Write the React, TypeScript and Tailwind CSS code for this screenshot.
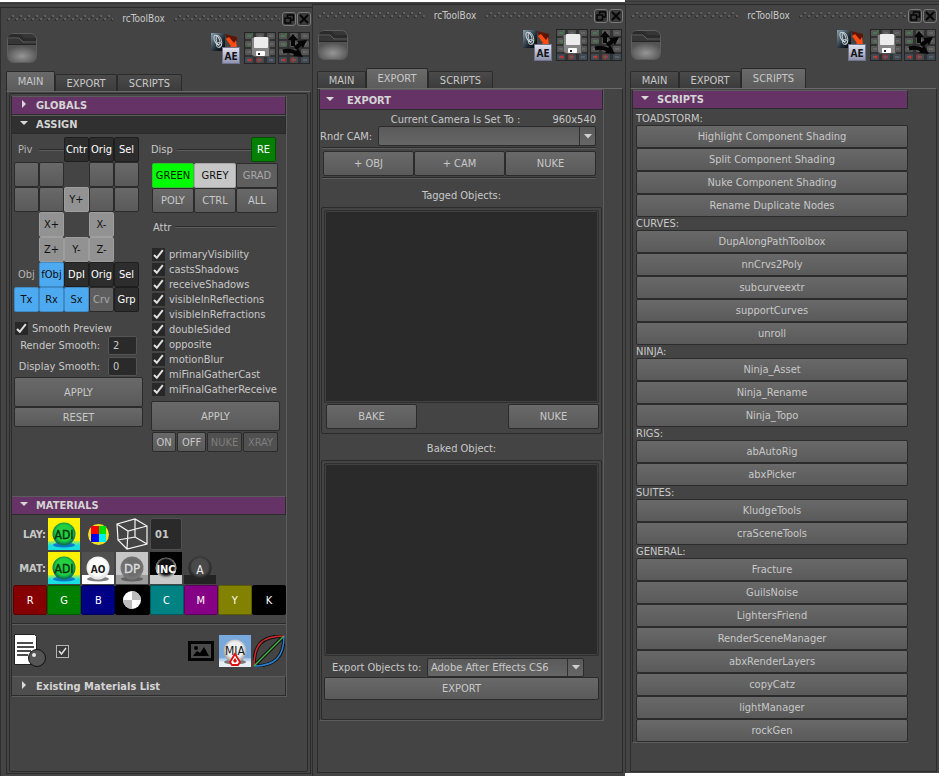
import { useId, type ReactNode } from "react";

const cx = (...parts: (string | false | undefined)[]) => parts.filter(Boolean).join(" ");

/* ---------- basic controls ---------- */

const tones = {
  plain: "border-[#2b2b2b] bg-linear-to-b from-[#696969] to-[#5a5a5a] text-[#c8c8c8]",
  off: "border-[#2b2b2b] bg-[#505050] text-[#7e7e7e]",
  dim: "border-[#2b2b2b] bg-[#5e5e5e] text-[#a8a8a8]",
  dark: "border-[#1e1e1e] bg-[#2d2d2d] text-white",
  light: "border-[#9e9e9e] bg-[#929292] text-[#111111]",
  blue: "border-[#3c8ac6] bg-[#4eaaf0] text-[#101010]",
  green: "border-[#2fc42f] bg-[#00ff00] text-[#0a200a]",
  grey: "border-[#a8a8a8] bg-[#c6c6c6] text-[#101010]",
  forest: "border-[#054f05] bg-[#058005] text-white",
};
type Tone = keyof typeof tones;

function Btn({ tone = "plain", className, children, label }: { tone?: Tone; className?: string; children?: ReactNode; label?: string }) {
  return (
    <button type="button" aria-label={label} className={cx("flex items-center justify-center overflow-hidden rounded-[2px] border whitespace-nowrap", tones[tone], className)}>
      {children}
    </button>
  );
}

function Check({ id, label, framed }: { id: string; label?: string; framed?: boolean }) {
  return (
    <span className="flex items-center">
      <span className="grid size-[13px] shrink-0 place-items-center">
        <input id={id} type="checkbox" defaultChecked aria-label={label ? undefined : "Enabled"}
          className={cx("col-start-1 row-start-1 size-full appearance-none", framed ? "border border-[#b5b5b5] bg-[#3a3a3a]" : "bg-[#282828]")} />
        <svg viewBox="0 0 13 13" className="pointer-events-none col-start-1 row-start-1 size-full" aria-hidden="true">
          <path d={framed ? "M3 6 5.500 9 10 3" : "M2 7 4.800 9.800 10.800 2.200"} fill="none" stroke="#e0e0e0" strokeWidth={framed ? "1.500" : "2"} />
        </svg>
      </span>
      {label && <label htmlFor={id} className="pl-1 whitespace-nowrap">{label}</label>}
    </span>
  );
}

function Select({ id, label, options, className }: { id: string; label?: string; options: string[]; className?: string }) {
  return (
    <span className={cx("grid min-w-0", className)}>
      <select id={id} aria-label={label} className="col-start-1 row-start-1 w-full appearance-none rounded-[2px] border border-[#2b2b2b] bg-linear-to-b from-[#5a5a5a] to-[#666666] pr-5 pl-[3px] text-[#c8c8c8]">
        {options.map((o) => <option key={o}>{o}</option>)}
      </select>
      <span className="pointer-events-none col-start-1 row-start-1 my-px flex w-[17px] items-center justify-center justify-self-end border-l border-[#2f2f2f]">
        <svg viewBox="0 0 8 5" className="h-[5px] w-2" aria-hidden="true"><path d="M0 0h8L4 4.500z" fill="#d0d0d0" /></svg>
      </span>
    </span>
  );
}

function Header({ title, open, tone, className, wide }: { title: string; open?: boolean; tone: "purple" | "dark" | "grey"; className?: string; wide?: boolean }) {
  return (
    <button type="button" aria-expanded={!!open}
      className={cx("flex w-full items-center border-t border-r border-b border-t-[#5c5c5c] border-r-[#2b2b2b] border-b-[#2b2b2b] text-left font-bold text-[#d4d4d4]",
        tone === "purple" && "bg-[#663366]", tone === "dark" && "bg-[#303030]", tone === "grey" && "bg-[#4e4e4e]", wide ? "pl-[6px]" : "pl-2", className ?? "h-[19px]")}>
      <svg viewBox="0 0 8 8" className="mb-[3px] size-2 shrink-0" aria-hidden="true">
        <path d={open ? "M0 2h8L4 6z" : "M2 0v8l4-4z"} fill="#d8d8d8" />
      </svg>
      <span className={wide ? "pl-[13px]" : "pl-2"}>{title}</span>
    </button>
  );
}

function Rule({ className }: { className?: string }) {
  return <div className={cx("h-[2px] border-t border-b border-t-[#2b2b2b] border-b-[#5c5c5c]", className)} />;
}

/* ---------- toolbar drawings ---------- */

function Grip() {
  const id = useId();
  return (
    <svg className="h-[7px] min-w-0 flex-1" aria-hidden="true">
      <pattern id={id} width="8" height="7" patternUnits="userSpaceOnUse">
        <path d="M0 4h2v2H0zM4 1h2v2H4z" fill="#323232" />
        <path d="M1 3h2v2H1zM5 0h2v2H5z" fill="#606060" />
      </pattern>
      <rect width="100%" height="7" fill={`url(#${id})`} />
    </svg>
  );
}

function FolderIcon() {
  const id = useId();
  return (
    <svg viewBox="0 0 30 30" className="size-[30px]" aria-hidden="true">
      <radialGradient id={id} cx=".5" cy=".65" r=".6"><stop offset="0" stopColor="#969696" /><stop offset="1" stopColor="#535353" /></radialGradient>
      <rect x=".5" y=".5" width="29" height="29" rx="6" fill="#363636" stroke="#5e5e5e" />
      <path d="M1 4Q2 1 6 1h7l4 4h12v5H18l-4-4H1z" fill="#2b2b2b" />
      <path d="M1 5h11l4 4h13" fill="none" stroke="#606060" />
      <path d="M1 12h28v12q0 5-5 5H6q-5 0-5-5z" fill={`url(#${id})`} />
      <path d="M1 11.500h28" stroke="#242424" />
    </svg>
  );
}

function AfterEffectsIcon() {
  const id = useId();
  return (
    <svg viewBox="0 0 32 32" className="size-8" aria-hidden="true">
      <linearGradient id={id} x2="1" y2="1"><stop stopColor="#8aa2b0" /><stop offset=".6" stopColor="#1d2a33" /><stop offset="1" stopColor="#000" /></linearGradient>
      <linearGradient id={id + "b"} y2="1" x2="0"><stop stopColor="#e2e3ef" /><stop offset="1" stopColor="#8d90ad" /></linearGradient>
      <rect x="1" y="1" width="14" height="18" fill={`url(#${id})`} />
      <g fill="none" stroke="#cfd8dc" strokeWidth=".9"><ellipse cx="7" cy="8" rx="2.500" ry="5" transform="rotate(-25 7 8)" /><ellipse cx="9" cy="9" rx="2.500" ry="5.500" transform="rotate(-15 9 9)" /><circle cx="9" cy="13" r="2.500" /></g>
      <path d="m15 2 12 3v3l-2 4-9-7z" fill="#5c1607" />
      <path d="m16 7 3-2 5 6 2-3 1 8-9 1 3-3z" fill="#ff4a10" />
      <rect x="12.500" y="15.500" width="17" height="16" fill={`url(#${id}b)`} stroke="#70748e" />
      <text x="21" y="28" textAnchor="middle" fontSize="10" fontWeight="700" fill="#14141c">AE</text>
    </svg>
  );
}

function KeyGrid() {
  return (
    <>
      <rect width="32" height="32" fill="#323232" />
      {[0, 1, 2, 3].map((r) => [0, 1, 2].map((c) => (
        <g key={`${r}${c}`}>
          <rect x={1 + c * 11} y={1 + r * 8} width="8" height="6" rx="1" fill={r === 3 ? "#3f4a55" : "#555555"} />
          <path d={`M${3 + c * 11} ${4 + r * 8}h4`} stroke="#787878" />
        </g>
      )))}
      <path d="m4 3 1 2 4-4M4 13l2 1 3-3" fill="none" stroke="#2a8a38" />
      <circle cx="6" cy="28" r="1.500" fill="#e02828" /><circle cx="15" cy="28" r="2" fill="none" stroke="#b92d20" />
      <rect x=".5" y=".5" width="31" height="31" fill="none" stroke="#252525" />
    </>
  );
}

function SaveIcon() {
  return (
    <svg viewBox="0 0 32 32" className="size-8" aria-hidden="true">
      <KeyGrid />
      <path d="M7.500 5.500h18v19H10l-2.500-2z" fill="#858585" stroke="#4e4e4e" />
      <rect x="10" y="5" width="14" height="11" rx="1" fill="#ececec" />
      <rect x="12" y="19" width="9" height="5" rx="1" fill="#fff" /><path d="M14 21h2v2h-2z" fill="#222" />
    </svg>
  );
}

function MoveIcon() {
  return (
    <svg viewBox="0 0 32 32" className="size-8" aria-hidden="true">
      <KeyGrid />
      <path d="M15 14V8M17 16l6-4M5 19.500q8-2 14 2" fill="none" stroke="#050505" strokeWidth="4" />
      <path d="m10 8 5-6 5 6zM19 9l10-1-4 8zM20 16l5 9-10-1z" fill="#050505" />
    </svg>
  );
}

/* ---------- panel shell ---------- */

function Panel({ active, top, tail, className, frame, children }: { active: string; top: string; tail: string; className?: string; frame?: string; children: ReactNode }) {
  return (
    <section className={cx("flex min-w-0 flex-col bg-[#444444]", className)}>
      <div className={cx("border-b border-[#2b2b2b]", top)}><div className="h-[2px] border-b border-[#383838]" /></div>
      <div className={cx("flex flex-1 flex-col border-l border-[#2e2e2e]", tail)}>
        <header className="flex h-[21px] items-center gap-px pl-px">
          <Grip />
          <h1 className="px-2 text-[10px]">rcToolBox</h1>
          <Grip />
          <button type="button" aria-label="Float panel" className="ml-px size-[14px] rounded-[3px] border border-[#7a7a7a] bg-[#3a3a3a]">
            <svg viewBox="0 0 12 12" className="size-3" aria-hidden="true"><path d="M4.500 4V2h6v5H8M2 5h5.500v5H2z" fill="none" stroke="#050505" strokeWidth="1.500" /></svg>
          </button>
          <button type="button" aria-label="Close panel" className="size-[14px] rounded-[3px] border border-[#7a7a7a] bg-[#3a3a3a]">
            <svg viewBox="0 0 12 12" className="size-3" aria-hidden="true"><path d="m2 2 8 8M10 2l-8 8" stroke="#050505" strokeWidth="1.800" /></svg>
          </button>
        </header>
        <div className="mt-[3px] flex h-8 items-center pr-px pl-px">
          <button type="button" aria-label="Open folder"><FolderIcon /></button>
          <div className="ml-auto flex gap-[2px]">
            <button type="button" aria-label="Export to After Effects"><AfterEffectsIcon /></button>
            <button type="button" aria-label="Save shelf"><SaveIcon /></button>
            <button type="button" aria-label="Move shelf"><MoveIcon /></button>
          </div>
        </div>
        <div role="tablist" className="mt-[7px] flex h-5 items-end text-[11px]">
          {["MAIN", "EXPORT", "SCRIPTS"].map((t) => (
            <button key={t} type="button" role="tab" aria-selected={t === active}
              className={cx("rounded-t-[2px] border border-b-0 text-center", t === "MAIN" ? "w-[49px]" : t === "EXPORT" ? "w-[62px]" : "w-[65px]",
                t === active ? "h-5 border-[#292929] bg-linear-to-b from-[#6a6a6a] to-[#5c5c5c]" : "h-[17px] border-[#2b2b2b] bg-linear-to-b from-[#4a4a4a] to-[#3c3c3c]")}>
              {t}
            </button>
          ))}
        </div>
        <div role="tabpanel" className={cx("flex-1 border border-[#2b2b2b] border-t-[#6a6a6a]", frame)}>{children}</div>
      </div>
    </section>
  );
}

/* ---------- MAIN ---------- */

type Cell = [string, Tone] | null | "blank" | "label:Piv" | "label:Obj" | "line";
const pivotCells: Cell[] = [
  "label:Piv", "line", ["Cntr", "dark"], ["Orig", "dark"], ["Sel", "dark"],
  "blank", "blank", null, "blank", "blank",
  "blank", "blank", ["Y+", "light"], "blank", "blank",
  null, ["X+", "light"], null, ["X-", "light"], null,
  null, ["Z+", "light"], ["Y-", "light"], ["Z-", "light"], null,
  "label:Obj", ["fObj", "blue"], ["DpI", "dark"], ["Orig", "dark"], ["Sel", "dark"],
  ["Tx", "blue"], ["Rx", "blue"], ["Sx", "blue"], ["Crv", "dim"], ["Grp", "dark"],
];
const attributes = ["primaryVisibility", "castsShadows", "receiveShadows", "visibleInReflections", "visibleInRefractions", "doubleSided", "opposite", "motionBlur", "miFinalGatherCast", "miFinalGatherReceive"];

function PivotGrid() {
  return (
    <div className="grid auto-rows-[25px] grid-cols-[repeat(5,25px)]">
      {pivotCells.map((c, i) => {
        if (c === null) return <span key={i} />;
        if (c === "line") return <Rule key={i} className="self-center" />;
        if (c === "blank") return <Btn key={i} label="Pivot point" />;
        if (typeof c === "string") return <span key={i} className="self-center pl-1 text-[#b5b5b5]">{c.slice(6)}</span>;
        return <Btn key={i} tone={c[1]}>{c[0]}</Btn>;
      })}
    </div>
  );
}

function Assign() {
  return (
    <div className="flex min-h-[362px] gap-2 pt-[3px] pl-[2px]">
      <div className="flex w-[129px] flex-col">
        <PivotGrid />
        <div className="mt-[10px] pl-px"><Check id="smooth" label="Smooth Preview" /></div>
        <div className="flex h-5 items-center justify-end pr-[6px]">
          <label htmlFor="rs">Render Smooth:</label>
          <input id="rs" defaultValue="2" className="ml-2 h-[19px] w-[29px] rounded-[2px] border border-[#555555] bg-[#2a2a2a] pl-1" />
        </div>
        <div className="flex h-[22px] items-center justify-end pr-[6px]">
          <label htmlFor="ds">Display Smooth:</label>
          <input id="ds" defaultValue="0" className="ml-2 h-[19px] w-[29px] rounded-[2px] border border-[#555555] bg-[#2a2a2a] pl-1" />
        </div>
        <Btn className="h-[30px]">APPLY</Btn>
        <Btn className="h-5">RESET</Btn>
      </div>
      <div className="flex w-[129px] flex-col">
        <div className="flex h-[25px] items-center">
          <span>Disp</span><Rule className="ml-1 flex-1" /><Btn tone="forest" className="mr-1 size-[25px]">RE</Btn>
        </div>
        <div className="mt-px grid auto-rows-[25px] grid-cols-[repeat(3,42px)] pl-px">
          <Btn tone="green">GREEN</Btn><Btn tone="grey">GREY</Btn><Btn tone="dim">GRAD</Btn>
          <Btn>POLY</Btn><Btn>CTRL</Btn><Btn>ALL</Btn>
        </div>
        <div className="flex h-[28px] items-center pr-1 pl-[2px]"><span>Attr</span><Rule className="ml-1 flex-1" /></div>
        <div className="mt-[7px] flex flex-col gap-[2px] pl-px">
          {attributes.map((a) => <Check key={a} id={a} label={a} />)}
        </div>
        <Btn className="mt-[5px] h-[30px]">APPLY</Btn>
        <div className="mt-px flex h-5 gap-px pl-px">
          <Btn className="w-[24px]">ON</Btn><Btn className="w-[29px]">OFF</Btn><Btn tone="off" className="w-[35px]">NUKE</Btn><Btn tone="off" className="w-[35px]">XRAY</Btn>
        </div>
      </div>
    </div>
  );
}

function Ball({ kind }: { kind: "ADI" | "AO" | "DP" | "INC" | "A" | "MIA" }) {
  const id = useId();
  const k = {
    ADI: { bg: "#fff200", floor: "#18e0e0", hi: "#22d040", lo: "#067a52", ink: "#06320f", size: 12 },
    AO: { bg: "#505050", floor: "#ffffff", hi: "#ffffff", lo: "#e6e6e6", ink: "#1c1c1c", size: 10 },
    DP: { bg: "#c6c6c6", floor: "#9a9a9a", hi: "#6c6c6c", lo: "#777777", ink: "#dddddd", size: 13 },
    INC: { bg: "#000000", floor: "#c9c9c9", hi: "#111111", lo: "#b8b8b8", ink: "#ffffff", size: 11 },
    A: { bg: "#444444", floor: "#232323", hi: "#4a4a4a", lo: "#242424", ink: "#f0f0f0", size: 12 },
    MIA: { bg: "#78a8dc", floor: "#e8eef5", hi: "#f0f0f0", lo: "#a8a8a8", ink: "#151515", size: 12 },
  }[kind];
  return (
    <svg viewBox="0 0 32 32" className="size-8" aria-hidden="true">
      <radialGradient id={id} cx=".5" cy=".45"><stop stopColor={k.hi} /><stop offset=".7" stopColor={k.hi} /><stop offset="1" stopColor={k.lo} /></radialGradient>
      <linearGradient id={id + "f"} x2="0" y2="1"><stop stopColor={k.floor} stopOpacity={kind === "ADI" || kind === "MIA" ? ".3" : "1"} /><stop offset=".5" stopColor={k.floor} /></linearGradient>
      <rect width="32" height="32" fill={k.bg} />
      <rect y="23" width="32" height="9" fill={`url(#${id}f)`} />
      {kind !== "A" && kind !== "INC" && <ellipse cx="16" cy="27" rx="11" ry="2.500" fill={kind === "ADI" ? "#0a48c8" : "#4a4a4a"} opacity=".7" />}
      <circle cx="16" cy="16" r={kind === "INC" ? 10.500 : 11.500} fill={`url(#${id})`} />
      <text x="16" y={kind === "A" ? 22 : kind === "MIA" ? 20 : 21} textAnchor="middle" fontSize={k.size} fontWeight={kind === "AO" || kind === "INC" ? 700 : 400} fill={k.ink} stroke={kind === "DP" || kind === "ADI" ? k.ink : "none"} strokeWidth=".4">{kind}</text>
      {kind === "MIA" && <><path d="m16 19 5 8-2 3h-6l-2-3z" fill="#fff" stroke="#dc1010" strokeWidth="1.800" /><path d="m16 23 2 3-2 2-2-2z" fill="#dc1010" /></>}
    </svg>
  );
}

function Materials() {
  const swatches = [["R", "bg-[#850000] border-[#5c0000]"], ["G", "bg-[#008000] border-[#005a00]"], ["B", "bg-[#000085] border-[#00005c]"], ["", "bg-black border-black"], ["C", "bg-[#008282] border-[#005c5c]"], ["M", "bg-[#850085] border-[#5c005c]"], ["Y", "bg-[#828200] border-[#5c5c00]"], ["K", "bg-black border-black"]];
  return (
    <div>
      <div className="mt-[3px] flex h-8 items-center gap-[2px]">
        <span className="w-[34px] text-right font-semibold">LAY:</span>
        <button type="button" aria-label="ADI layer"><Ball kind="ADI" /></button>
        <button type="button" aria-label="Colour layer">
          <svg viewBox="0 0 32 32" className="size-8" aria-hidden="true"><circle cx="16.500" cy="16.500" r="10.500" fill="#f4e020" /><path d="M9 8h8v8H9z" fill="red" /><path d="M17 8h7v8h-7z" fill="#00e000" /><path d="M9 16h8v8H9z" fill="#0000f0" /><path d="M17 16h7v8h-7z" fill="#00f0f0" /></svg>
        </button>
        <button type="button" aria-label="Wireframe layer">
          <svg viewBox="0 0 32 32" className="size-8" aria-hidden="true"><path d="M1 6 19 1l12 7v18L11 31 2 22zM1 6l11 7 19-5M12 13l-1 18M19 1v18L2 22M19 19l12 7" fill="none" stroke="#f5f5f5" strokeWidth="1.200" /></svg>
        </button>
        <input aria-label="Layer number" defaultValue="01" className="size-8 rounded-[2px] border border-[#505050] bg-[#2a2a2a] pl-1 font-bold" />
      </div>
      <div className="mt-[2px] flex h-8 items-center gap-[2px]">
        <span className="w-[34px] text-right font-semibold">MAT:</span>
        {(["ADI", "AO", "DP", "INC", "A"] as const).map((k) => <button key={k} type="button" aria-label={`${k} material`}><Ball kind={k} /></button>)}
      </div>
      <div className="mt-px grid h-[30px] grid-cols-8 pl-px">
        {swatches.map(([t, c], i) => (
          <button key={i} type="button" aria-label={t || "Checker"} className={cx("flex items-center justify-center rounded-[2px] border text-white", c)}>
            {t || <svg viewBox="0 0 18 18" className="size-[18px]" aria-hidden="true"><circle cx="9" cy="9" r="9" fill="#fff" /><path d="M9 0a9 9 0 0 1 9 9H9zM9 18a9 9 0 0 1-9-9h9z" fill="#bdbdbd" /></svg>}
          </button>
        ))}
      </div>
      <Rule className="mt-2" />
      <div className="mt-[9px] mb-2 flex h-[34px] items-center pr-px pl-[2px]">
        <button type="button" aria-label="Material notes">
          <svg viewBox="0 0 32 34" className="h-[34px] w-8" aria-hidden="true">
            <path d="M.5.500h20l2 2v28H.500z" fill="#fff" stroke="#222" /><path d="M3 9h16M3 13h17M3 17h14M3 21h11" stroke="#111" strokeWidth="1.500" />
            <circle cx="23" cy="24" r="8.500" fill="#555" stroke="#111" /><circle cx="20" cy="21" r="2" fill="#e8e8e8" />
          </svg>
        </button>
        <div className="ml-[10px]"><Check id="notes" framed /></div>
        <div className="ml-auto flex items-center">
          <button type="button" aria-label="File texture" className="mr-[5px]">
            <svg viewBox="0 0 26 20" className="h-5 w-[26px]" aria-hidden="true"><path d="M1.500 1.500h23v17h-23z" fill="#4a4a4a" stroke="#050505" strokeWidth="3" /><circle cx="8" cy="7" r="2" /><path d="m5 15 4-5 3 2 4-6 5 9z" /></svg>
          </button>
          <button type="button" aria-label="MIA material" className="mr-[2px]"><Ball kind="MIA" /></button>
          <button type="button" aria-label="Curves">
            <svg viewBox="0 0 32 32" className="size-8" fill="none" strokeWidth="1.500" aria-hidden="true"><g stroke="#111" strokeWidth="3.500"><path d="M1 31C1 10 8 1 31 1" /><path d="M1 31C22 31 31 22 31 1" /><path d="M1 31 31 1" /></g><path d="M1 31C1 10 8 1 31 1" stroke="#d02a2a" /><path d="M1 31C22 31 31 22 31 1" stroke="#2a7fd0" /><path d="M1 31 31 1" stroke="#44b544" /></svg>
          </button>
        </div>
      </div>
    </div>
  );
}

function MainTab() {
  return (
    <div className="h-full rounded-[2px] border border-[#2b2b2b] pt-[2px] pr-5 pl-px">
      <div className="border-r border-b border-l border-r-[#5c5c5c] border-b-[#5c5c5c] border-l-[#2b2b2b]">
        <Header title="GLOBALS" tone="purple" />
        <Header title="ASSIGN" open tone="dark" />
        <Assign />
        <Header title="MATERIALS" open tone="purple" />
        <Materials />
        <Header title="Existing Materials List" tone="grey" className="h-5" />
      </div>
    </div>
  );
}

/* ---------- EXPORT ---------- */

function ListBox({ label }: { label: string }) {
  return <div role="listbox" aria-label={label} className="h-[193px] rounded-[2px] border border-[#303030] bg-[#2a2a2a] outline outline-[#404040] -outline-offset-2" />;
}

function ExportTab() {
  return (
    <div className="mr-[18px] ml-px border-r border-b border-l border-r-[#5c5c5c] border-b-[#5c5c5c] border-l-[#2b2b2b]">
      <Header title="EXPORT" open tone="purple" wide className="h-[21px] pt-px" />
      <div className="flex h-4 items-center justify-end gap-8 pt-[3px] pr-[7px]"><span>Current Camera Is Set To :</span><span>960x540</span></div>
      <div className="flex h-5 items-center pr-[7px]">
        <label htmlFor="cam" className="w-[58px] shrink-0 whitespace-nowrap">Rndr CAM:</label>
        <Select id="cam" options={[""]} className="h-5 flex-1" />
      </div>
      <Rule className="mt-px mr-[7px] ml-[2px]" />
      <div className="mt-[2px] mr-[7px] ml-[3px] grid h-[25px] grid-cols-3"><Btn>+ OBJ</Btn><Btn>+ CAM</Btn><Btn>NUKE</Btn></div>
      <Rule className="mt-px mr-[7px] ml-[2px]" />
      <h2 className="flex h-[28px] items-center justify-center pt-1">Tagged Objects:</h2>
      <div className="mx-px rounded-[2px] border border-[#2b2b2b] px-[2px] pt-[2px] pb-1">
        <ListBox label="Tagged Objects" />
        <div className="mt-px flex justify-between pl-[2px]"><Btn className="h-[25px] w-[91px]">BAKE</Btn><Btn className="h-[25px] w-[91px]">NUKE</Btn></div>
      </div>
      <h2 className="flex h-[26px] items-center justify-center pt-[3px]">Baked Object:</h2>
      <div className="mx-px rounded-[2px] border border-[#2b2b2b] px-[2px] pt-[2px] pb-[19px]">
        <ListBox label="Baked Object" />
        <div className="mt-px flex h-5 items-center pr-[15px] pl-2">
          <label htmlFor="target" className="whitespace-nowrap">Export Objects to:</label>
          <Select id="target" options={["Adobe After Effects CS6"]} className="ml-auto h-[19px] w-[157px]" />
        </div>
        <Btn className="h-[23px] w-full">EXPORT</Btn>
      </div>
    </div>
  );
}

/* ---------- SCRIPTS ---------- */

const scripts: [string, string[]][] = [
  ["TOADSTORM:", ["Highlight Component Shading", "Split Component Shading", "Nuke Component Shading", "Rename Duplicate Nodes"]],
  ["CURVES:", ["DupAlongPathToolbox", "nnCrvs2Poly", "subcurveextr", "supportCurves", "unroll"]],
  ["NINJA:", ["Ninja_Asset", "Ninja_Rename", "Ninja_Topo"]],
  ["RIGS:", ["abAutoRig", "abxPicker"]],
  ["SUITES:", ["KludgeTools", "craSceneTools"]],
  ["GENERAL:", ["Fracture", "GuilsNoise", "LightersFriend", "RenderSceneManager", "abxRenderLayers", "copyCatz", "lightManager", "rockGen"]],
];

function ScriptsTab() {
  return (
    <div className="mr-[28px] ml-px border-b border-l border-b-[#5c5c5c] border-l-[#2b2b2b]">
      <Header title="SCRIPTS" open tone="purple" />
      <div className="pt-[3px] pl-[3px]">
        {scripts.map(([group, names]) => (
          <div key={group} className="flex flex-col">
            <h2 className="h-[13px] leading-[13px]">{group}</h2>
            {names.map((n) => <Btn key={n} className="h-[23px]">{n}</Btn>)}
          </div>
        ))}
      </div>
    </div>
  );
}

export default function App() {
  return (
    <main className="grid min-h-screen grid-cols-[312fr_313fr_314fr] bg-white font-['DejaVu_Sans_Condensed','DejaVu_Sans',sans-serif] text-[11px] leading-[13px] text-[#c8c8c8]">
      <Panel active="MAIN" top="h-[6px]" tail="pb-[2px] pl-[5px] pr-px" className="mt-[2px]" frame="pt-px px-[2px] pb-px"><MainTab /></Panel>
      <Panel active="EXPORT" top="h-[3px]" tail="pb-[3px] pl-1 pr-[2px]" className="mt-[2px]"><ExportTab /></Panel>
      <Panel active="SCRIPTS" top="h-[5px]" tail="pb-px pl-1 pr-[2px]" className="mb-[3px]" frame="pt-px"><ScriptsTab /></Panel>
    </main>
  );
}
